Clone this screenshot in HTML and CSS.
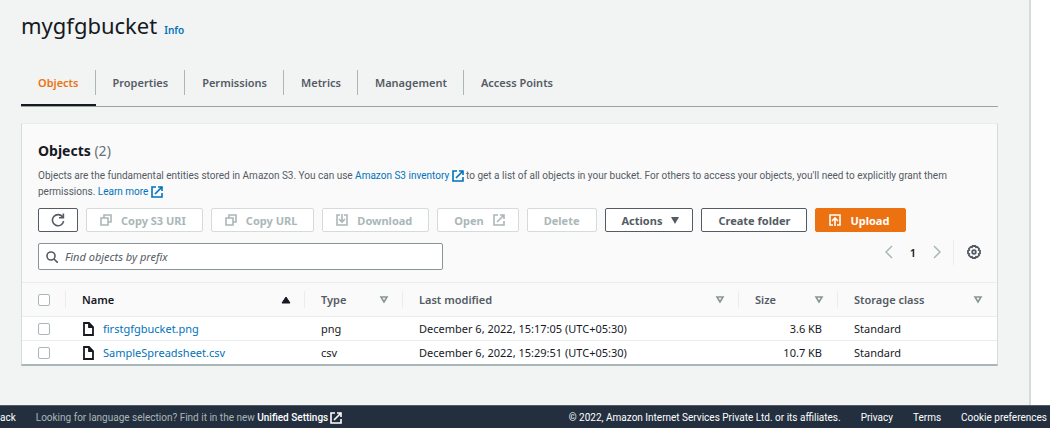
FILE: index.html
```html
<!DOCTYPE html>
<html lang="en">
<head>
  <meta charset="UTF-8">
  <meta name="viewport" content="width=device-width, initial-scale=1.0">
  <title>mygfgbucket - S3 bucket</title>
  <link rel="stylesheet" href="styles.css">
</head>
<body>

  <!-- shared icons -->
  <svg class="sprite" aria-hidden="true">
    <symbol id="external" viewBox="0 0 12 12">
      <path d="M5 1H1v10h10V7M7 1h4v4M11 1L4 8" />
    </symbol>
    <symbol id="copy" viewBox="0 0 12 12">
      <path d="M1 4h7v7H1zM4 4V1h7v7H8" />
    </symbol>
    <symbol id="file" viewBox="0 0 12 14">
      <path d="M2 1h5l4 4v8H2zM7 1v4h4" />
    </symbol>
    <symbol id="sort" viewBox="0 0 10 8">
      <path d="M2 1h6L5 6z" />
    </symbol>
  </svg>

  <div class="layout">
    <main class="content">
      <header class="page-header">
        <h1>mygfgbucket</h1>
        <a href="#" class="info">Info</a>
      </header>

      <nav class="tabs" aria-label="Bucket sections">
        <a href="#" class="tab active" aria-current="page">Objects</a>
        <a href="#" class="tab">Properties</a>
        <a href="#" class="tab">Permissions</a>
        <a href="#" class="tab">Metrics</a>
        <a href="#" class="tab">Management</a>
        <a href="#" class="tab">Access Points</a>
      </nav>

      <section class="card">
        <div class="card-header">
          <h2>Objects <span class="count">(2)</span></h2>
          <p class="description">Objects are the fundamental entities stored in Amazon S3. You can use <a href="#">Amazon S3 inventory <svg class="icon"><use href="#external" /></svg></a> to get a list of all objects in your bucket. For others to access your objects, you'll need to explicitly grant them permissions. <a href="#">Learn more <svg class="icon"><use href="#external" /></svg></a></p>

          <div class="actions">
            <button class="btn btn-icon" aria-label="Refresh">
              <svg class="icon-lg" viewBox="0 0 14 14"><path d="M11.8 4.2A5.6 5.6 0 1 0 12.6 8M12.4 0.5v4.3H8" /></svg>
            </button>
            <button class="btn icon-left" disabled><svg class="icon"><use href="#copy" /></svg>Copy S3 URI</button>
            <button class="btn icon-left" disabled><svg class="icon"><use href="#copy" /></svg>Copy URL</button>
            <button class="btn icon-left" disabled>
              <svg class="icon" viewBox="0 0 12 12"><path d="M4 1H1v10h10V1H8M6 0v8M3 5l3 3 3-3" /></svg>Download
            </button>
            <button class="btn icon-right" disabled>Open<svg class="icon"><use href="#external" /></svg></button>
            <button class="btn" disabled>Delete</button>
            <button class="btn icon-right" aria-haspopup="true">Actions<svg class="caret" viewBox="0 0 8 7"><path d="M0 0h8L4 7z" /></svg></button>
            <button class="btn">Create folder</button>
            <button class="btn btn-primary icon-left">
              <svg class="icon" viewBox="0 0 12 12"><path d="M4 11H1V1h10v10H8M6 12V4M3 7l3-3 3 3" /></svg>Upload
            </button>
          </div>

          <div class="filter-row">
            <label class="search">
              <svg class="icon" viewBox="0 0 12 12"><circle cx="5" cy="5" r="4" /><path d="M8 8l4 4" /></svg>
              <input type="text" placeholder="Find objects by prefix" aria-label="Find objects by prefix">
            </label>
            <div class="pagination">
              <button class="page-arrow" aria-label="Previous page"><svg viewBox="0 0 8 14"><path d="M7 1L1 7l6 6" /></svg></button>
              <button class="page-number">1</button>
              <button class="page-arrow" aria-label="Next page"><svg viewBox="0 0 8 14"><path d="M1 1l6 6-6 6" /></svg></button>
              <button class="settings" aria-label="Preferences">
                <svg viewBox="0 0 14 14">
                  <path d="M5.6 1h2.8l.6 1.2 1.3-.3 1.8 1.8-.3 1.3 1.2.6v2.8l-1.2.6.3 1.3-1.8 1.8-1.3-.3-.6 1.2H5.6L5 11.8l-1.3.3-1.8-1.8.3-1.3L1 8.4V5.6L2.2 5l-.3-1.3 1.8-1.8 1.3.3z" />
                  <circle cx="7" cy="7" r="1.8" />
                </svg>
              </button>
            </div>
          </div>
        </div>

        <table class="objects">
          <colgroup>
            <col class="col-select">
            <col class="col-name">
            <col class="col-type">
            <col class="col-modified">
            <col class="col-size">
            <col class="col-class">
          </colgroup>
          <thead>
            <tr>
              <th><input type="checkbox" aria-label="Select all"></th>
              <th class="sorted"><div class="th">Name<svg class="sort sort-up" viewBox="0 0 10 8"><path d="M1 7h8L5 1z" /></svg></div></th>
              <th><div class="th">Type<svg class="sort"><use href="#sort" /></svg></div></th>
              <th><div class="th">Last modified<svg class="sort"><use href="#sort" /></svg></div></th>
              <th><div class="th">Size<svg class="sort"><use href="#sort" /></svg></div></th>
              <th><div class="th">Storage class<svg class="sort"><use href="#sort" /></svg></div></th>
            </tr>
          </thead>
          <tbody>
            <tr>
              <td><input type="checkbox" aria-label="Select firstgfgbucket.png"></td>
              <td><a href="#" class="object"><svg class="file"><use href="#file" /></svg>firstgfgbucket.png</a></td>
              <td>png</td>
              <td>December 6, 2022, 15:17:05 (UTC+05:30)</td>
              <td class="size">3.6 KB</td>
              <td>Standard</td>
            </tr>
            <tr>
              <td><input type="checkbox" aria-label="Select SampleSpreadsheet.csv"></td>
              <td><a href="#" class="object"><svg class="file"><use href="#file" /></svg>SampleSpreadsheet.csv</a></td>
              <td>csv</td>
              <td>December 6, 2022, 15:29:51 (UTC+05:30)</td>
              <td class="size">10.7 KB</td>
              <td>Standard</td>
            </tr>
          </tbody>
        </table>
      </section>
    </main>
    <aside class="help-panel"></aside>
  </div>

  <footer class="footer">
    <a href="#">ack</a>
    <span class="language">Looking for language selection? Find it in the new <a href="#">Unified Settings<svg class="icon"><use href="#external" /></svg></a></span>
    <span class="copyright">© 2022, Amazon Internet Services Private Ltd. or its affiliates.</span>
    <a href="#">Privacy</a>
    <a href="#">Terms</a>
    <a href="#">Cookie preferences</a>
  </footer>

</body>
</html>
```
FILE: styles.css
```css
* {
  box-sizing: border-box;
}

body {
  margin: 0;
  min-height: 100vh;
  display: flex;
  flex-direction: column;
  font-family: "Noto Sans", "Open Sans", sans-serif;
  font-size: 11px;
  line-height: 16px;
  color: #16191f;
  background-color: #fff;
}

a {
  color: #0073bb;
  text-decoration: none;
}

button, input {
  font-family: inherit;
  font-size: inherit;
  margin: 0;
}

button {
  cursor: pointer;
}

svg {
  fill: none;
  stroke: currentColor;
  flex: none;
}

.sprite {
  display: none;
}

.icon {
  width: 12px;
  height: 12px;
  stroke-width: 1.6;
}

.icon-lg {
  width: 14px;
  height: 14px;
  stroke-width: 1.6;
}

.layout {
  flex: 1;
  display: flex;
}

.content {
  flex: 1;
  min-width: 0;
  padding: 9px 31px 39px 21px;
  background-color: #f2f3f3;
  border-right: 2px solid #d5dbdb;
}

.help-panel {
  width: 19px;
}

/* title and tabs */
.page-header {
  display: flex;
  align-items: baseline;
  gap: 7px;
}

h1 {
  margin: 0;
  font-size: 22px;
  font-weight: 400;
  line-height: 32px;
}

.info {
  font-size: 10px;
  font-weight: 600;
}

.tabs {
  display: flex;
  margin-top: 18px;
  border-bottom: 1px solid #95a5a6;
}

.tab {
  position: relative;
  padding: 16px 17px 15px;
  color: #545b64;
  font-weight: 600;
}

.tab:not(:last-child)::after {
  content: "";
  position: absolute;
  top: 11px;
  right: 0;
  height: 25px;
  border-right: 1px solid #aab7b8;
}

.tab.active {
  color: #ec7211;
  padding-bottom: 13px;
  border-bottom: 2px solid #16191f;
}

/* objects card */
.card {
  margin-top: 16px;
  background-color: #fafafa;
  border: 1px solid #d5dbdb;
  border-top-color: #eaeded;
  border-bottom: 2px solid #aab7b8;
}

.card-header {
  padding: 16px 16px 12px;
}

h2 {
  margin: 0;
  font-size: 14px;
  font-weight: 700;
  line-height: 22px;
}

.count {
  font-weight: 400;
  color: #687078;
}

.description {
  margin: 6px 0 8px;
  padding-right: 16px;
  font-family: Roboto, "Noto Sans", sans-serif;
  font-size: 10px;
  color: #545b64;
}

.description .icon {
  vertical-align: -3px;
}

.actions {
  display: flex;
  gap: 8px;
}

.btn {
  display: flex;
  align-items: center;
  gap: 9px;
  height: 24px;
  padding: 0 16px;
  border: 1px solid #545b64;
  border-radius: 2px;
  background-color: #fff;
  color: #545b64;
  font-weight: 700;
  white-space: nowrap;
}

.btn-icon {
  padding: 0 12px;
}

.icon-left {
  padding-left: 13px;
}

.icon-right {
  padding-right: 13px;
}

.btn:disabled {
  border-color: #d5dbdb;
  color: #aab7b8;
  cursor: default;
}

.btn-primary {
  background-color: #ec7211;
  border-color: #ec7211;
  color: #fff;
}

.caret {
  width: 8px;
  height: 7px;
  fill: currentColor;
  stroke: none;
}

.filter-row {
  display: flex;
  align-items: flex-start;
  justify-content: space-between;
  margin-top: 11px;
}

.search {
  display: flex;
  align-items: center;
  gap: 7px;
  width: 43%;
  height: 27px;
  padding: 0 7px;
  border: 1px solid #879596;
  border-radius: 2px;
  background-color: #fff;
  color: #545b64;
}

.search input {
  flex: 1;
  min-width: 0;
  padding: 0;
  border: 0;
  outline: none;
  background: none;
}

.search input::placeholder {
  color: #545b64;
  font-style: italic;
}

.pagination {
  display: flex;
  align-items: center;
  height: 18px;
}

.pagination button {
  display: flex;
  align-items: center;
  padding: 0;
  border: 0;
  background: none;
}

.page-arrow {
  color: #aab7b8;
}

.page-arrow svg {
  width: 8px;
  height: 14px;
  stroke-width: 1.5;
}

.pagination .page-number {
  padding: 0 17px;
  font-weight: 600;
  color: #16191f;
}

.pagination .settings {
  height: 25px;
  margin-left: 12px;
  padding-left: 13px;
  border-left: 1px solid #eaeded;
  color: #545b64;
}

.settings svg {
  width: 14px;
  height: 14px;
  stroke-width: 1.8;
}

/* table */
.objects {
  width: 100%;
  table-layout: fixed;
  border-collapse: collapse;
  background-color: #fff;
}

.col-select { width: 44px; }
.col-name { width: 239px; }
.col-type { width: 98px; }
.col-size { width: 99px; }
.col-class { width: 159px; }

.objects th,
.objects td {
  padding: 4px 16px 3px;
  text-align: left;
  font-weight: 400;
}

.objects tr > :first-child {
  padding-right: 0;
}

.objects thead tr {
  background-color: #fafafa;
  border-top: 1px solid #eaeded;
  border-bottom: 1px solid #eaeded;
}

.objects th {
  height: 34px;
  padding-right: 14px;
  color: #545b64;
  font-weight: 600;
}

.objects thead th:not(:last-child) {
  background: linear-gradient(#eaeded, #eaeded) right center / 1px 17px no-repeat;
}

.objects th.sorted {
  color: #16191f;
}

.th {
  display: flex;
  align-items: center;
  justify-content: space-between;
}

.sort {
  width: 10px;
  height: 8px;
  stroke: #879596;
  stroke-width: 1.6;
}

.sort-up {
  fill: #16191f;
  stroke: #16191f;
  stroke-width: 1;
}

.objects tbody tr + tr {
  border-top: 1px solid #eaeded;
}

.objects .size {
  text-align: right;
}

.object {
  display: flex;
  align-items: center;
  gap: 9px;
}

.file {
  width: 12px;
  height: 14px;
  color: #16191f;
  stroke-width: 1.8;
}

input[type="checkbox"] {
  appearance: none;
  display: block;
  width: 12px;
  height: 12px;
  border: 1px solid #aab7b8;
  border-radius: 2px;
  background-color: #fff;
}

/* footer */
.footer {
  display: flex;
  align-items: center;
  gap: 20px;
  height: 23px;
  padding: 1px 3px 0 0;
  border-top: 1px solid #545b64;
  background-color: #232f3e;
  color: #fff;
  font-family: Roboto, "Noto Sans", sans-serif;
  font-size: 10px;
  white-space: nowrap;
}

.footer a {
  color: #fff;
}

.footer .icon {
  margin-left: 2px;
  vertical-align: -3px;
}

.language {
  color: #aab7b8;
}

.language a {
  font-weight: 500;
}

.copyright {
  margin-left: auto;
}
```
